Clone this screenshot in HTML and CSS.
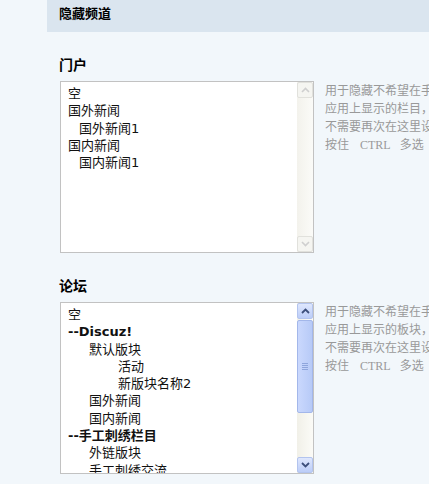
FILE: index.html
```html
<!DOCTYPE html>
<html lang="zh">
<head>
<meta charset="utf-8">
<title>隐藏频道</title>
<link rel="stylesheet" href="styles.css">
</head>
<body>
<div class="page">
  <div class="band">隐藏频道</div>
  <div class="content">
    <section class="sec">
      <h3 class="title">门户</h3>
      <div class="row">
        <div class="selbox">
          <ul class="opts">
            <li>空</li>
            <li>国外新闻</li>
            <li class="sub">国外新闻1</li>
            <li>国内新闻</li>
            <li class="sub">国内新闻1</li>
          </ul>
          <div class="sb sb-off">
            <div class="sb-btn"><svg width="9" height="6" viewBox="0 0 9 6"><path d="M1 5 L4.5 1.5 L8 5" fill="none" stroke="#cfcfcf" stroke-width="1.6"/></svg></div>
            <div class="sb-track"></div>
            <div class="sb-btn"><svg width="9" height="6" viewBox="0 0 9 6"><path d="M1 1 L4.5 4.5 L8 1" fill="none" stroke="#cfcfcf" stroke-width="1.6"/></svg></div>
          </div>
        </div>
        <div class="help">
          <p>用于隐藏不希望在手机</p>
          <p>应用上显示的栏目，已</p>
          <p>不需要再次在这里设置</p>
          <p>按住<span class="key">CTRL</span>多选</p>
        </div>
      </div>
    </section>
    <section class="sec">
      <h3 class="title">论坛</h3>
      <div class="row">
        <div class="selbox">
          <ul class="opts">
            <li>空</li>
            <li class="b">--Discuz!</li>
            <li class="l1">默认版块</li>
            <li class="l2">活动</li>
            <li class="l2">新版块名称2</li>
            <li class="l1">国外新闻</li>
            <li class="l1">国内新闻</li>
            <li class="b">--手工刺绣栏目</li>
            <li class="l1">外链版块</li>
            <li class="l1">手工刺绣交流</li>
          </ul>
          <div class="sb sb-on">
            <div class="sb-btn"><svg width="9" height="6" viewBox="0 0 9 6"><path d="M1 5 L4.5 1.5 L8 5" fill="none" stroke="#3d4f7c" stroke-width="1.8"/></svg></div>
            <div class="sb-thumb"><span></span><span></span><span></span><span></span></div>
            <div class="sb-track"></div>
            <div class="sb-btn"><svg width="9" height="6" viewBox="0 0 9 6"><path d="M1 1 L4.5 4.5 L8 1" fill="none" stroke="#3d4f7c" stroke-width="1.8"/></svg></div>
          </div>
        </div>
        <div class="help">
          <p>用于隐藏不希望在手机</p>
          <p>应用上显示的板块，已</p>
          <p>不需要再次在这里设置</p>
          <p>按住<span class="key">CTRL</span>多选</p>
        </div>
      </div>
    </section>
  </div>
</div>
</body>
</html>
```

FILE: styles.css
```css
html, body {
  margin: 0;
  padding: 0;
  background: #f2f7fb;
  overflow: hidden;
}
body {
  width: 429px;
  height: 484px;
  font-family: "DejaVu Sans", "Noto Sans CJK SC", sans-serif;
  font-size: 12px;
  color: #000;
}
.page {
  margin-left: 47px;
}
.band {
  height: 32px;
  box-sizing: border-box;
  padding: 3px 0 0 12px;
  line-height: 20px;
  background: #dae5ef;
  font-family: "Noto Sans CJK SC", sans-serif;
  font-weight: bold;
  font-size: 13px;
  color: #000;
}
.content {
  padding-left: 13px;
}
.sec {
  padding-top: 22px;
}
.title {
  margin: 0 0 7px -1px;
  font-family: "Noto Sans CJK SC", sans-serif;
  font-size: 14px;
  line-height: 20px;
  height: 20px;
  font-weight: bold;
  color: #000;
}
.row {
  display: flex;
  gap: 11px;
  align-items: flex-start;
}
.selbox {
  flex: 0 0 auto;
  width: 254px;
  height: 172px;
  box-sizing: border-box;
  border: 1px solid #c2c2c2;
  background: #fff;
  display: flex;
}
.opts {
  list-style: none;
  margin: 0;
  padding: 3px 0 0 7px;
  flex: 1;
  min-width: 0;
  overflow: hidden;
  font-size: 13px;
  line-height: 17.3px;
  white-space: nowrap;
  color: #111;
}
.opts .sub { padding-left: 11px; }
.opts .l1 { padding-left: 21px; }
.opts .l2 { padding-left: 50px; }
.opts .b { font-weight: bold; }

.sb {
  flex: 0 0 16px;
  width: 16px;
  display: flex;
  flex-direction: column;
}
.sb-btn {
  flex: 0 0 16px;
  height: 16px;
  box-sizing: border-box;
  display: flex;
  align-items: center;
  justify-content: center;
}
.sb-track {
  flex: 1;
}
.sb-off {
  background: linear-gradient(to right, #f3f2ec, #fbfbf8);
}
.sb-off .sb-btn {
  border: 1px solid #e1e1dc;
  border-radius: 2px;
  background: #f5f5f1;
}
.sb-on {
  background: linear-gradient(to right, #f1f0e8, #fbfbf7);
}
.sb-on .sb-btn {
  border: 1px solid #b3c4ee;
  border-radius: 2px;
  background: linear-gradient(to bottom, #dfe7fd, #bccdf8);
}
.sb-thumb {
  flex: 0 0 93px;
  margin-top: 1px;
  box-sizing: border-box;
  border: 1px solid #a3b7ea;
  border-radius: 2px;
  background: linear-gradient(to right, #cad8fd, #b7caf7);
  display: flex;
  flex-direction: column;
  align-items: center;
  justify-content: center;
  gap: 1px;
}
.sb-thumb span {
  display: block;
  width: 6px;
  height: 1px;
  background: #8ea5dc;
}
.help {
  flex: 1;
  min-width: 0;
  overflow: hidden;
  white-space: nowrap;
  font-family: "Noto Sans CJK SC", sans-serif;
  font-size: 12px;
  line-height: 18px;
  color: #999;
}
.help p {
  margin: 0;
}
.help .key {
  font-family: "Liberation Serif", serif;
  font-size: 12px;
  margin: 0 9px 0 11px;
}
```
